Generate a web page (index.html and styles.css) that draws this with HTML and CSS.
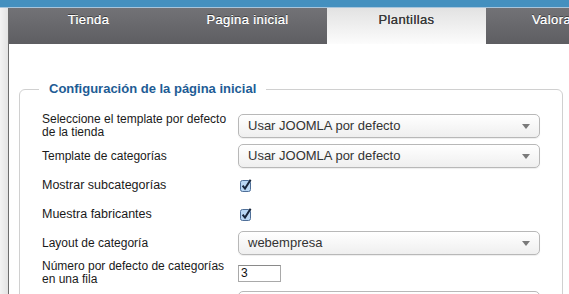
FILE: index.html
```html
<!DOCTYPE html>
<html lang="es">
<head>
  <meta charset="UTF-8" />
  <meta name="viewport" content="width=device-width, initial-scale=1" />
  <title>Tienda - Plantillas</title>
  <link rel="stylesheet" href="styles.css">
</head>
<body>

  <div class="topbar"></div>

  <div class="layout">
    <aside class="sidebar"></aside>

    <div class="main">
      <nav class="tabs">
        <div class="tab">Tienda</div>
        <div class="tab">Pagina inicial</div>
        <div class="tab active">Plantillas</div>
        <div class="tab wide">Valoraciones</div>
      </nav>

      <div class="panel">
        <fieldset class="config">
          <legend>Configuración de la página inicial</legend>

          <div class="row">
            <label>Seleccione el template por defecto de la tienda</label>
            <div class="select"><span>Usar JOOMLA por defecto</span></div>
          </div>

          <div class="row">
            <label>Template de categorías</label>
            <div class="select"><span>Usar JOOMLA por defecto</span></div>
          </div>

          <div class="row">
            <label class="big">Mostrar subcategorías</label>
            <span class="checkbox">
              <svg viewBox="0 0 12 13" width="12" height="13">
                <rect x="0.5" y="1.5" width="10" height="11" rx="2" fill="#b9d7f4" stroke="#4f6f98" />
                <path d="M2.6 6.6 L5 9.6 L10.6 0.8" fill="none" stroke="#18263b" stroke-width="2" />
              </svg>
            </span>
          </div>

          <div class="row">
            <label class="big">Muestra fabricantes</label>
            <span class="checkbox">
              <svg viewBox="0 0 12 13" width="12" height="13">
                <rect x="0.5" y="1.5" width="10" height="11" rx="2" fill="#b9d7f4" stroke="#4f6f98" />
                <path d="M2.6 6.6 L5 9.6 L10.6 0.8" fill="none" stroke="#18263b" stroke-width="2" />
              </svg>
            </span>
          </div>

          <div class="row">
            <label>Layout de categoría</label>
            <div class="select"><span>webempresa</span></div>
          </div>

          <div class="row">
            <label>Número por defecto de categorías en una fila</label>
            <input class="text-input" type="text" value="3">
          </div>

          <!-- next row starts below the fold -->
          <div class="row">
            <label></label>
            <div class="select"></div>
          </div>
        </fieldset>
      </div>
    </div>
  </div>

</body>
</html>
```

FILE: styles.css
```css
/* Base reset and fonts */
* {
  margin: 0; padding: 0; box-sizing: border-box;
}
body {
  font-family: 'Liberation Sans', Arial, Helvetica, sans-serif;
  background: #fff;
  color: #222;
  height: 294px;
  overflow: hidden;
}

/* Top strip */
.topbar {
  height: 8px;
  background: #4490bf;
  border-bottom: 1px solid #a7c5dc;
}

.layout {
  display: flex;
  height: calc(100vh - 8px);
}
.sidebar {
  width: 9px;
  flex-shrink: 0;
  background: linear-gradient(to right, #f3f3f3, #e3e3e3);
  border-right: 1px solid #6d6d6d;
}
.main {
  flex-grow: 1;
  overflow: hidden;
}

/* Tabs */
.tabs {
  display: flex;
  height: 36px;
  background: linear-gradient(to bottom, #727276, #5e5e62);
  overflow: hidden;
}
.tab {
  width: 159px;
  flex-shrink: 0;
  padding-top: 4px;
  text-align: center;
  font-size: 13px;
  line-height: 16px;
  letter-spacing: 0.4px;
  color: #fff;
  text-shadow: 0 -1px 0 rgba(0, 0, 0, 0.45), 0 0 0.4px #fff;
}
.tab.wide {
  width: 171px;
}
.tab.active {
  background: linear-gradient(to bottom, #e2e2e2, #fcfcfc);
  color: #3a3a3a;
  text-shadow: 0 0 0.3px #3a3a3a;
}

/* Config panel */
.config {
  margin: 37px 6px 0 10px;
  border: 1px solid #d0d0d0;
  border-radius: 6px;
  padding: 16px 0 0 22px;
}
.config legend {
  margin-left: -3px;
  padding: 0 10px;
  font-size: 13px;
  line-height: 16px;
  font-weight: bold;
  color: #1e5c95;
}

.row {
  display: grid;
  grid-template-columns: 190px auto;
  column-gap: 6px;
  align-items: center;
  justify-items: start;
  min-height: 24px;
  margin-bottom: 5px;
}
.row label {
  font-size: 12px;
  line-height: 13px;
  color: #1a1a1a;
}
.row label.big {
  font-size: 12.5px;
}

.select {
  position: relative;
  width: 302px;
  height: 24px;
  border: 1px solid #b8b8b8;
  border-radius: 5px;
  background: linear-gradient(to bottom, #fff, #efefef);
  box-shadow: 0 1px 1px rgba(0, 0, 0, 0.07);
  padding-left: 9px;
  font-size: 13px;
  line-height: 22px;
  color: #333;
}
.select::after {
  content: '';
  position: absolute;
  right: 9px;
  top: 9px;
  border-left: 4px solid transparent;
  border-right: 4px solid transparent;
  border-top: 5px solid #7a7a7a;
}

.checkbox {
  display: flex;
  margin-left: 2px;
}

.text-input {
  width: 43px;
  height: 17px;
  border: 1px solid #a9a9a9;
  border-top-color: #8a8a8a;
  padding: 0 2px;
  font-family: 'Liberation Sans', Arial, sans-serif;
  font-size: 12px;
  color: #111;
}
```
